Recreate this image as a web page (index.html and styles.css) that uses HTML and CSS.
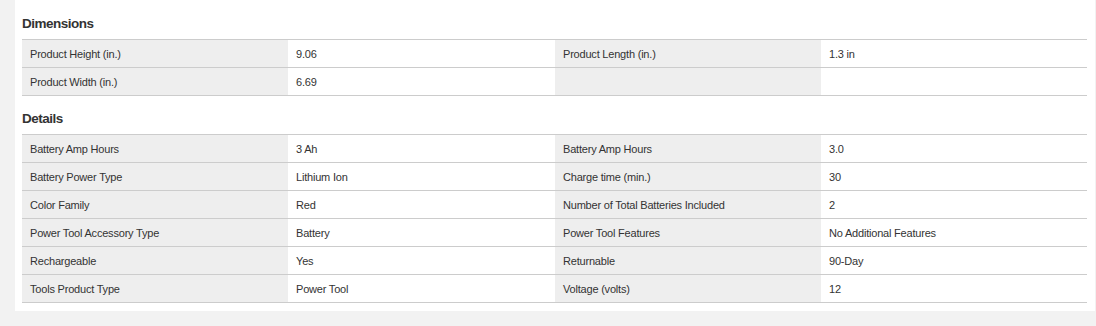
FILE: index.html
```html
<!DOCTYPE html>
<html>
<head>
<meta charset="utf-8">
<link rel="stylesheet" href="styles.css">
</head>
<body>
<div class="card">
  <section class="group">
    <h2 class="group-title">Dimensions</h2>
    <div class="specs">
      <div class="row">
        <div class="label">Product Height (in.)</div><div class="value">9.06</div>
        <div class="label">Product Length (in.)</div><div class="value">1.3 in</div>
      </div>
      <div class="row">
        <div class="label">Product Width (in.)</div><div class="value">6.69</div>
        <div class="label"></div><div class="value"></div>
      </div>
    </div>
  </section>
  <section class="group">
    <h2 class="group-title">Details</h2>
    <div class="specs">
      <div class="row">
        <div class="label">Battery Amp Hours</div><div class="value">3 Ah</div>
        <div class="label">Battery Amp Hours</div><div class="value">3.0</div>
      </div>
      <div class="row">
        <div class="label">Battery Power Type</div><div class="value">Lithium Ion</div>
        <div class="label">Charge time (min.)</div><div class="value">30</div>
      </div>
      <div class="row">
        <div class="label">Color Family</div><div class="value">Red</div>
        <div class="label">Number of Total Batteries Included</div><div class="value">2</div>
      </div>
      <div class="row">
        <div class="label">Power Tool Accessory Type</div><div class="value">Battery</div>
        <div class="label">Power Tool Features</div><div class="value">No Additional Features</div>
      </div>
      <div class="row">
        <div class="label">Rechargeable</div><div class="value">Yes</div>
        <div class="label">Returnable</div><div class="value">90-Day</div>
      </div>
      <div class="row">
        <div class="label">Tools Product Type</div><div class="value">Power Tool</div>
        <div class="label">Voltage (volts)</div><div class="value">12</div>
      </div>
    </div>
  </section>
</div>
</body>
</html>
```
FILE: styles.css
```css
* { box-sizing: border-box; }
html, body { margin: 0; padding: 0; }
body {
  background: #f2f2f2;
  font-family: "Liberation Sans", Arial, sans-serif;
  color: #333;
  padding: 0 1px 15px 15px;
}
.card {
  background: #fff;
  padding: 11px 8px 8px 7px;
}
.group-title {
  margin: 0;
  font-size: 13.5px;
  font-weight: bold;
  line-height: 22px;
  height: 28px;
  padding-top: 2px;
  color: #333;
  letter-spacing: -0.5px;
}
.group + .group .group-title { padding-top: 12px; height: 38px; }
.specs {
  border-top: 1px solid #ccc;
}
.row {
  display: grid;
  grid-template-columns: 266px 267px 266px 266px;
  border-bottom: 1px solid #ccc;
  height: 28px;
}
.label, .value {
  font-size: 11px;
  letter-spacing: -0.2px;
  line-height: 26px;
  padding: 1px 8px 0;
  white-space: nowrap;
}
.label { background: #eeeeee; }
.value { background: #fff; }
```
